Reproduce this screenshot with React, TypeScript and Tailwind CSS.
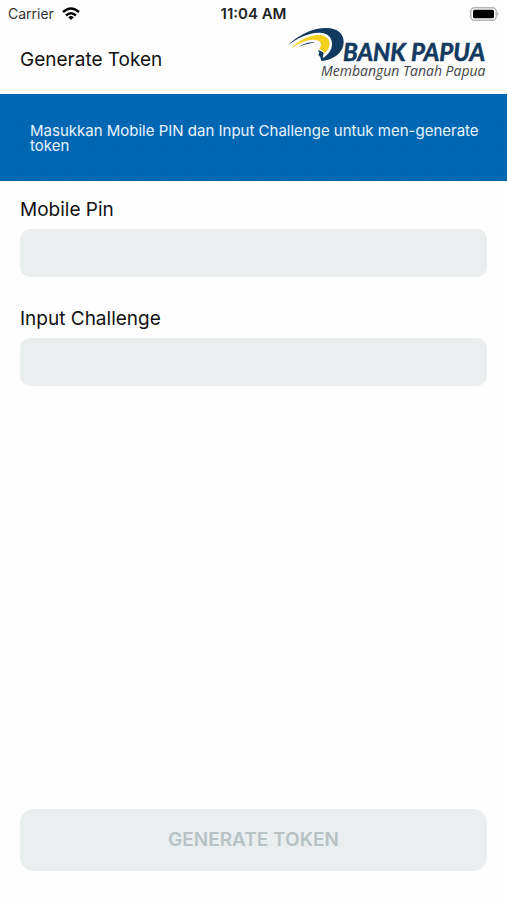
import { useId, useState } from 'react';

function BankLogo() {
  return (
    <svg viewBox="0 0 200 54" className="h-[54px] w-[200px] shrink-0" role="img" aria-label="Bank Papua">
      <g transform="translate(-8 -8) scale(0.3333)">
        <path fill="#123a60" d="M27 76C55 47 98 25 136 24C174 23 194 39 194 66C194 95 167 120 127 123L124 112L118 104L121 99L117 90C124 92 130 95 134 99L131 114C147 106 160 89 159 70C158 48 141 37 119 38C84 39 52 56 27 76Z" />
        <path fill="#f5cf1d" d="M36 86C57 62 91 45 120 45C144 46 156 61 151 79C147 90 142 96 136 99C132 93 127 89 120 87C130 77 128 63 111 60C88 56 59 70 36 86Z" />
        <path fill="#123a60" d="M57 82C75 69 93 65 108 67C98 70 75 73 57 82Z" />
      </g>
      <text x="56" y="33" fontSize="24" className="fill-[#123a60] font-['Lato',sans-serif] font-bold italic" stroke="#123a60" strokeWidth="0.6">BANK PAPUA</text>
      <text x="34" y="48" fontSize="14" className="fill-[#444444] font-['Open_Sans',sans-serif] italic">Membangun Tanah Papua</text>
    </svg>
  );
}

function StatusBar() {
  return (
    <div className="grid h-7 grid-cols-3 items-center px-2 font-['Inter',sans-serif] text-sm">
      <div className="flex items-center gap-2 text-[#333333]">
        <span>Carrier</span>
        <svg viewBox="0 0 18 14" className="h-3.5 w-[18px]" aria-hidden="true" fill="none" stroke="#000000" strokeWidth="2.4">
          <path d="M1 5Q9 -2 17 5" />
          <path d="M4 8.5Q9 4 14 8.5" />
          <path d="M6.2 10.2Q9 8 11.8 10.2L9 13Z" fill="#000000" stroke="none" />
        </svg>
      </div>
      <span className="text-center text-[15px] font-semibold text-[#222222]">11:04 AM</span>
      <svg viewBox="0 0 30 14" className="h-3.5 w-[30px] justify-self-end" aria-hidden="true">
        <rect x="1.8" y="0.8" width="25.4" height="12.4" rx="3.5" fill="#ffffff" stroke="#b5b5b5" strokeWidth="1.4" />
        <rect x="4" y="2.8" width="21" height="8.4" rx="1.5" fill="#000000" />
        <path d="M28.3 5Q30.5 7 28.3 9Z" fill="#aaaaaa" />
      </svg>
    </div>
  );
}

function Field({ label, value, onChange, type }: { label: string; value: string; onChange: (v: string) => void; type: string }) {
  const id = useId();
  return (
    <div className="flex flex-col gap-[7px]">
      <label htmlFor={id} className="text-[19px] leading-6 text-[#111111]">{label}</label>
      <input id={id} type={type} value={value} onChange={(e) => onChange(e.target.value)} className="h-12 w-full rounded-[10px] bg-[#eaeeef] px-4 text-[19px] outline-none" />
    </div>
  );
}

export default function App() {
  const [pin, setPin] = useState('');
  const [challenge, setChallenge] = useState('');
  return (
    <div className="flex min-h-screen flex-col bg-[#fefefe] font-['Inter',sans-serif]">
      <StatusBar />
      <header className="flex h-[66px] items-start justify-between px-5">
        <h1 className="pt-5 text-[19px] leading-6 text-[#111111]">Generate Token</h1>
        <BankLogo />
      </header>
      <section className="bg-[#0267b3] bg-[radial-gradient(ellipse_5px_3px_at_center,#0063ad,transparent)] bg-[length:24px_27px] bg-[position:8px_13px] pt-[29px] pr-5 pb-7 pl-[30px]">
        <p className="text-[15px] leading-[15px] text-[#e8f4ff]">Masukkan Mobile PIN dan Input Challenge untuk men-generate token</p>
      </section>
      <form className="flex flex-1 flex-col px-5 pt-[17px] pb-[29px]" onSubmit={(e) => e.preventDefault()}>
        <div className="flex flex-col gap-[30px]">
          <Field label="Mobile Pin" type="password" value={pin} onChange={setPin} />
          <Field label="Input Challenge" type="text" value={challenge} onChange={setChallenge} />
        </div>
        <button type="submit" disabled={!pin || !challenge} className="mt-auto h-[62px] w-full rounded-[14px] bg-[#eaeeef] text-[19px] font-semibold text-[#b7c2c5]">GENERATE TOKEN</button>
      </form>
    </div>
  );
}
